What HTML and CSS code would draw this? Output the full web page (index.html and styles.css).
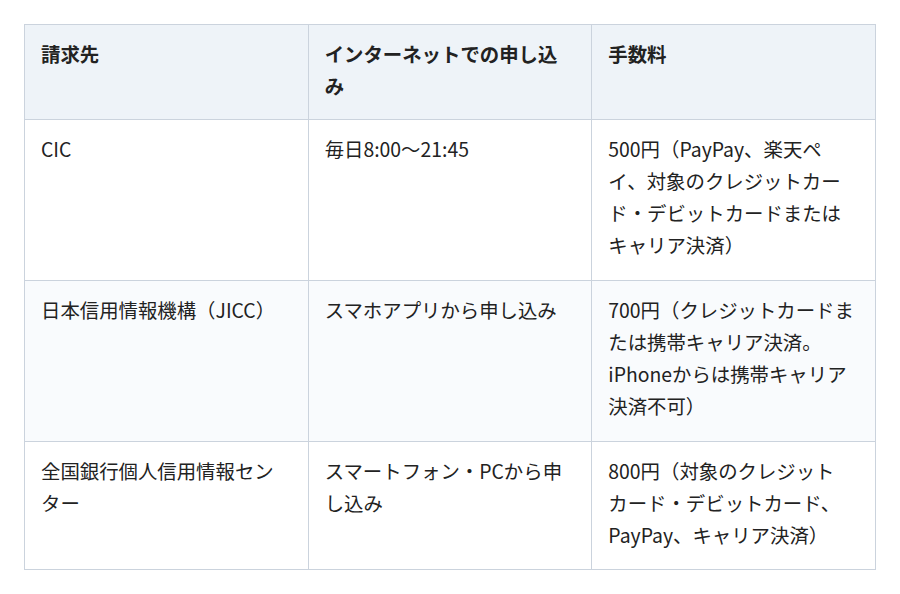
FILE: index.html
```html
<!DOCTYPE html>
<html lang="ja">
<head>
<meta charset="utf-8">
<title>信用情報の開示請求</title>
<link rel="stylesheet" href="styles.css">
</head>
<body>
<div class="page">
<table class="fees">
<thead>
<tr>
<th>請求先</th>
<th>インターネットでの申し込<br>み</th>
<th>手数料</th>
</tr>
</thead>
<tbody>
<tr>
<td>CIC</td>
<td>毎日8:00～21:45</td>
<td>500円（PayPay、楽天ペ<br>イ、対象のクレジットカー<br>ド・デビットカードまたは<br>キャリア決済）</td>
</tr>
<tr class="alt">
<td>日本信用情報機構（JICC）</td>
<td>スマホアプリから申し込み</td>
<td>700円（クレジットカードま<br>たは携帯キャリア決済。<br>iPhoneからは携帯キャリア<br>決済不可）</td>
</tr>
<tr>
<td>全国銀行個人信用情報セン<br>ター</td>
<td>スマートフォン・PCから申<br>し込み</td>
<td>800円（対象のクレジット<br>カード・デビットカード、<br>PayPay、キャリア決済）</td>
</tr>
</tbody>
</table>
</div>
</body>
</html>
```

FILE: styles.css
```css
html, body {
  margin: 0;
  padding: 0;
  background: #ffffff;
}

.page {
  padding: 24px;
  font-family: "Noto Sans CJK JP", "Noto Sans", sans-serif;
  font-size: 19.4px;
  line-height: 32px;
  color: #222222;
}

.fees {
  width: 852px;
  border-collapse: collapse;
  table-layout: fixed;
}

.fees th,
.fees td {
  width: 33.333%;
  border: 1px solid #cbd3dd;
  padding: 13px 16px 19px;
  text-align: left;
  vertical-align: top;
  white-space: nowrap;
}

.fees th {
  padding-bottom: 17px;
  background: #eef3f8;
  font-weight: 700;
}

.fees tbody tr:last-child td {
  padding-bottom: 18px;
}

.fees tr.alt td {
  background: #f9fbfd;
}
```
